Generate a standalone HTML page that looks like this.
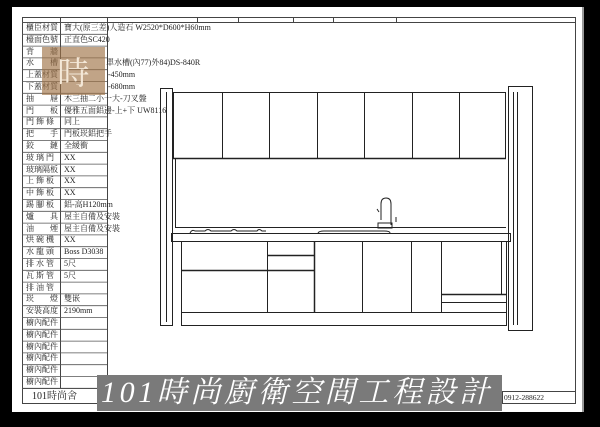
<!DOCTYPE html>
<html><head><meta charset="utf-8"><style>
*{margin:0;padding:0;box-sizing:border-box}
body{width:600px;height:427px;background:#000;position:relative;overflow:hidden;font-family:"Liberation Serif","Noto Serif CJK SC","Noto Sans CJK TC",serif}
.page{position:absolute;left:12px;top:7px;width:572px;height:405px;background:#fff;border-right:2px solid #999}
.ab{position:absolute}
.t{position:absolute;font-size:8.5px;line-height:11.8px;color:#222;white-space:nowrap}
</style></head><body>
<div class="page"></div>
<svg class="ab" style="left:0;top:0" width="600" height="427">
<g stroke="#444" stroke-width="1" fill="none">
<rect x="22.5" y="17.5" width="553" height="386"/>
<line x1="22" y1="22.5" x2="575" y2="22.5"/>
<line x1="197.5" y1="17" x2="197.5" y2="22"/>
<line x1="238.5" y1="17" x2="238.5" y2="22"/>
<line x1="293.5" y1="17" x2="293.5" y2="22"/>
<line x1="333.5" y1="17" x2="333.5" y2="22"/>
<line x1="396.5" y1="17" x2="396.5" y2="22"/>
<line x1="60.5" y1="17" x2="60.5" y2="388"/>
<line x1="107.5" y1="17" x2="107.5" y2="403"/>
<line x1="22" y1="388.5" x2="107" y2="388.5"/>
<rect x="502.5" y="391.5" width="73" height="12"/>
</g>
<g stroke="#555" stroke-width="0.8" id="rows"></g>
<g stroke="#222" stroke-width="1" fill="none">
<rect x="160.5" y="88.5" width="12" height="237"/>
<line x1="166.5" y1="92" x2="166.5" y2="322"/>
<rect x="508.5" y="86.5" width="24" height="244"/>
<line x1="513.5" y1="92" x2="513.5" y2="325"/>
<line x1="517.5" y1="92" x2="517.5" y2="325"/>
<rect x="173.5" y="92.5" width="332" height="66"/>
<line x1="173" y1="158.5" x2="506" y2="158.5" stroke-width="1.6"/>
<line x1="222.5" y1="92" x2="222.5" y2="159"/>
<line x1="269.5" y1="92" x2="269.5" y2="159"/>
<line x1="317.5" y1="92" x2="317.5" y2="159"/>
<line x1="364.5" y1="92" x2="364.5" y2="159"/>
<line x1="412.5" y1="92" x2="412.5" y2="159"/>
<line x1="459.5" y1="92" x2="459.5" y2="159"/>
<line x1="175.5" y1="159" x2="175.5" y2="227"/>
<line x1="175" y1="227.5" x2="506" y2="227.5"/>
<rect x="171.5" y="233.5" width="339" height="8"/>
<rect x="181.5" y="241.5" width="325" height="71"/>
<rect x="181.5" y="312.5" width="325" height="13"/>
<line x1="172.5" y1="241" x2="172.5" y2="326"/>
<line x1="267.5" y1="241" x2="267.5" y2="312"/>
<line x1="314.5" y1="241" x2="314.5" y2="312" stroke-width="1.5"/>
<line x1="362.5" y1="241" x2="362.5" y2="312"/>
<line x1="411.5" y1="241" x2="411.5" y2="312"/>
<line x1="441.5" y1="241" x2="441.5" y2="312"/>
<line x1="181" y1="270.5" x2="314" y2="270.5" stroke-width="1.5"/>
<line x1="267" y1="255.5" x2="314" y2="255.5" stroke-width="1.5"/>
<line x1="441" y1="294.5" x2="506" y2="294.5" stroke-width="1.5"/>
<line x1="441" y1="302.5" x2="506" y2="302.5"/>
<line x1="501.5" y1="241" x2="501.5" y2="294"/>
<path d="M190 233 q2 -4 5 -2 l10 0 q3 -3 6 0 l20 0 q3 -3 6 0 l20 0 q2 -3 5 0 l4 0"/>
<path d="M318 233 q1 -2 6 -2 h60 q6 0 6 2"/>
<path d="M381 220 v-16 q0 -6 5 -6 q5 0 5 6 v21 M378 228 h14 v-5 h-14z M377 209 l2 3 M396 222 v-5"/>
</g>
</svg>
<div class="t" style="left:26px;top:22px;font-size:8px">
櫃臣材質<br>檯面色號<br>背　　牆<br>水　　槽<br>上蓋材質<br>下蓋材質<br>抽　　屜<br>門　　板<br>門 飾 條<br>把　　手<br>鉸　　鏈<br>玻 璃 門<br>玻璃隔板<br>上 飾 板<br>中 飾 板<br>踢 腳 板<br>爐　　具<br>油　　煙<br>烘 碗 機<br>水 龍 頭<br>排 水 管<br>瓦 斯 管<br>排 油 管<br>崁　　燈<br>安裝高度<br>櫥內配件<br>櫥內配件<br>櫥內配件<br>櫥內配件<br>櫥內配件<br>櫥內配件</div>
<div class="t" style="left:64px;top:22px;font-size:8px">
寶大(原三差)人造石 W2520*D600*H60mm<br>正直色SC420<br>&nbsp;<br>&nbsp;　　　　　單水槽(內77)外84)DS-840R<br>&nbsp;　　　　　&nbsp;-450mm<br>&nbsp;　　　　　&nbsp;-680mm<br>木三抽二小一大-刀叉盤<br>優雅五面鋁邊-上+下 UW8116<br>同上<br>門板崁鋁把手<br>全緩衝<br>XX<br>XX<br>XX<br>XX<br>鋁-高H120mm<br>屋主自備及安裝<br>屋主自備及安裝<br>XX<br>Boss D3038<br>5尺<br>5尺<br>&nbsp;<br>雙嵌<br>2190mm</div>
<div class="ab" style="left:42px;top:47px;width:63px;height:48px;background:rgba(160,115,70,0.65);color:#f4e8d8;font-size:32px;line-height:48px;text-align:center;font-family:'Noto Serif CJK SC',serif">時</div>
<div class="t" style="left:32px;top:390px;font-size:10px;line-height:13px">101時尚舍</div>
<div class="ab" style="left:97px;top:375px;width:405px;height:36px;background:#7a7a7a;color:#fff;font-size:30px;line-height:36px;font-style:italic;padding-left:4px;white-space:nowrap;overflow:hidden;font-family:'Liberation Serif','Noto Serif CJK SC',serif;letter-spacing:3.6px">101時尚廚衛空間工程設計</div>
<div class="t" style="left:504px;top:392px;font-size:7.5px;line-height:11px">0912-288622</div>
<script>
var g=document.getElementById('rows'),s='';
for(var i=0;i<=31;i++){var y=22.5+i*11.8;s+='<line x1="22" y1="'+y.toFixed(1)+'" x2="107" y2="'+y.toFixed(1)+'"/>';}
g.innerHTML=s;
</script>
</body></html>
